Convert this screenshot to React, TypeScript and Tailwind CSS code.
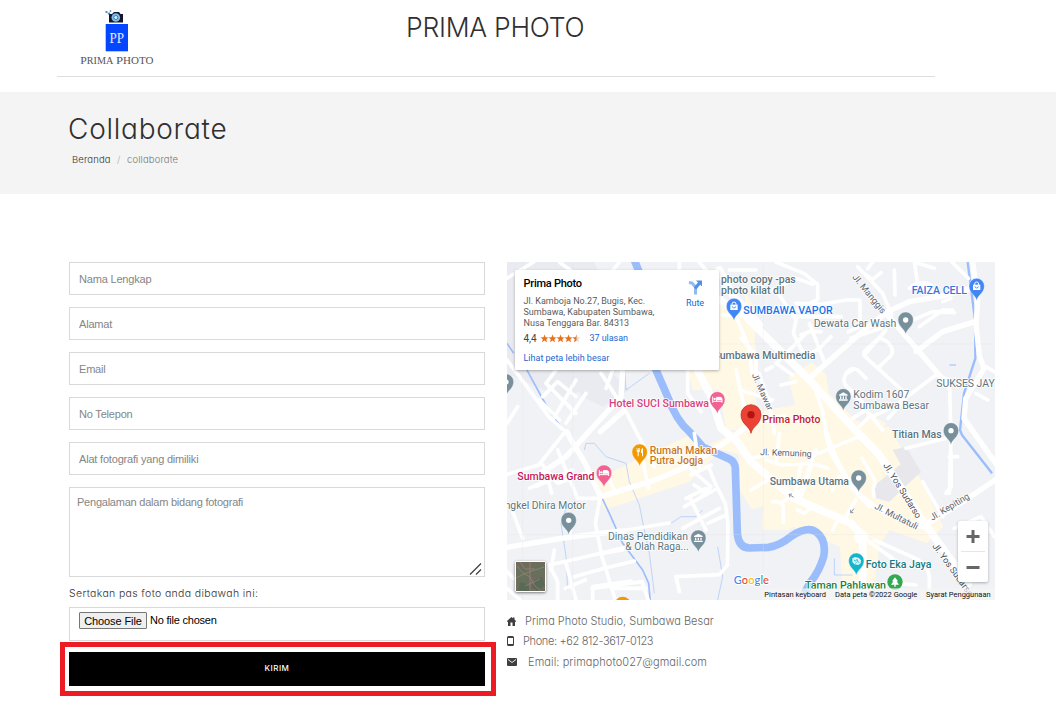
import React from "react";

const geo = "font-['Inter','Noto_Sans',sans-serif] [font-feature-settings:'cv11'] font-light";

function Logo() {
  return (
    <svg className="block h-[64px] w-[80px]" viewBox="77 6 80 64">
      <path d="M109 14h3l2-2h5l1.500 2h2.500v8.500h-14z" fill="#15152f" />
      <circle cx="115.800" cy="17.500" r="4.300" fill="#7fbce8" />
      <circle cx="115.800" cy="17.500" r="2" fill="#d7f0ff" stroke="#3c79ae" strokeWidth="1" />
      <path d="M105.500 11.500l2 1M108 14l2-1M110 10.500l1 1" stroke="#3c88b6" strokeWidth="1.500" />
      <rect x="105.700" y="24" width="22.300" height="27.300" fill="#0546ff" />
      <text x="109.500" y="42.500" fontSize="14" textLength="14.500" lengthAdjust="spacingAndGlyphs" fill="#e4ecff" fontFamily="Liberation Serif, serif">PP</text>
      <g fill="#555" fontFamily="Liberation Serif, serif">
        <text x="80.300" y="64.200" fontSize="11" textLength="33" lengthAdjust="spacingAndGlyphs">P<tspan fontSize="9.500">RIMA</tspan></text>
        <text x="116" y="64.200" fontSize="11" textLength="37.500" lengthAdjust="spacingAndGlyphs">P<tspan fontSize="9.500">HOTO</tspan></text>
      </g>
    </svg>
  );
}

function Pin({ x, y, c, kind = "dot" }: { x: number; y: number; c: string; kind?: string }) {
  return (
    <g transform={`translate(${x} ${y})`}>
      <path d="M0 43C-4 25-23 20-23-1A23 23 0 0 1 23-1C23 20 4 25 0 43Z" fill={c} stroke="#fff" strokeOpacity=".6" strokeWidth="2" />
      {kind === "dot" && <circle r="8" fill="#fff" />}
      {kind === "bag" && (
        <>
          <path d="M-11-5h22v16h-22z" fill="#fff" />
          <path d="M-6-4v-3a6 6 0 0 1 12 0v3" fill="none" stroke="#fff" strokeWidth="3" />
          <path d="M-5 0a5 5 0 0 0 10 0" fill="none" stroke={c} strokeWidth="2.500" />
        </>
      )}
      {kind === "bed" && (
        <>
          <path d="M-14-9v18M-14 5h28v4M14 5v-7q0-5-5-5H-2V5" fill="none" stroke="#fff" strokeWidth="3" />
          <path d="M-2-7H8q6 0 6 6v3H-2z" fill="#fff" />
          <circle cx="-8" cy="-2" r="3.500" fill="#fff" />
        </>
      )}
      {kind === "bank" && <path d="M-13-6L0-13 13-6v3h-26zM-10-1h4v8h-4zM-2-1h4v8h-4zM6-1h4v8H6zM-13 8h26v4h-26z" fill="#fff" />}
      {kind === "food" && <path d="M-9-12v8q0 4 3 5v12h3V1q4-1 4-5v-8h-2v7h-2v-7h-2v7h-2v-7zM10-12q-6 1-6 9v6h3v10h3z" fill="#fff" />}
      {kind === "camera" && (
        <>
          <path d="M-12-8l8-4 12 3 6 7-1 9-7 5-12-2-6-7z" fill="#d8f6f5" />
          <path d="M-7-4l4 5 5-6 2 7 5 2M-3 8l4-4" fill="none" stroke={c} strokeWidth="2.500" />
        </>
      )}
    </g>
  );
}

type LabelProps = { x: number; y: number; w: number; c?: string; r?: number; s?: number; m?: number; children: string };
function Label({ x, y, w, c = "#5b7480", r = 0, s = 31, m = 500, children }: LabelProps) {
  return (
    <text
      x={x}
      y={y}
      fontSize={s}
      fontWeight={m}
      fill={c}
      stroke="#fff"
      strokeWidth="5"
      strokeLinejoin="round"
      paintOrder="stroke"
      textLength={w}
      lengthAdjust="spacingAndGlyphs"
      transform={r ? `rotate(${r} ${x} ${y})` : undefined}
    >
      {children}
    </text>
  );
}

function MapDrawing() {
  return (
    <svg className="block h-full w-full" viewBox="3 6 1464 1014" fontFamily="Roboto, sans-serif">
      <rect width="1500" height="1050" fill="#f0f2f5" />
      {/* built-up areas */}
      <path d="M3 6h260l120 230-60 110-150 70L3 340zM170 330h140l60 60-80 50-60-30z" fill="#e9ebf0" />
      <g fill="#fef8e5">
        <path d="M640 130L690 130 717 190 750 260 750 510 660 510 640 390 560 390 545 330H640Z" />
        <path d="M717 90l30 60v100l-30-30zM847 350l70-42 42 32 10 60 80 80 80 32-20 38H737l-20-80 60-20 90-15z" />
        <path d="M1080 455l60 35-20 30-40-20z" />
        <path d="M270 660l130-65 165-75 70 60-85 85-255 85zM600 560l100-50h60v160l-30 20-20-90-20-20z" />
        <path d="M700 500h450l40 70 50 80 72 150-50 50-112-40-30 50-20 150h-90l-8-150-140-60-15 10h-80l5-70-35 8-37-60z" />
      </g>
      <path d="M1095 685l105-85 45 35-95 90-40-10zM1160 570l40-10 45 75-45 5z" fill="#e8e7ec" />
      {/* waterways */}
      <g fill="none" stroke="#9bbdfb" strokeLinejoin="round">
        <path d="M385 0L437 130" strokeWidth="23" />
        <path d="M437 300L485 410Q510 480 550 515L592 562 670 597Q687 605 688 625L694 820Q698 864 730 864L787 862Q820 858 857 828 905 797 932 817 962 840 953 890 940 935 912 968L895 1000" strokeWidth="23" />
        <path d="M3 250l20 30M60 325l60 110 60 90 60 80 30 70 40 85 40 90 60 80 18 40 8 90" strokeWidth="5" />
        <path d="M235 570l5-20 25 0 35 40 60 20 10 55 30 70 15 75 15 70 15 120M355 310l5 80 70-50M185 730l-20 60 15 100 5 100M495 790l30-20h45l20-20M635 860l15 90-15 70M985 895v50h55" strokeWidth="2.500" strokeOpacity=".7" />
        <path d="M1385 6l22 174 1 115-34 105-12 110 6 15 90 115" strokeWidth="7" />
        <path d="M1330 315h20" strokeWidth="3" />
      </g>
      {/* minor streets */}
      <g fill="none" stroke="#fff" strokeWidth="11" strokeLinecap="round" strokeLinejoin="round">
        <path d="M3 55l80-49M160 6l40 30M340 6l-65 85M520 6v30M580 6l45 55M3 300l60 80 65 90 50 45-80 100-95 28M35 440L3 490M110 410l45-45 55 45M150 330l-30 40 90 90M210 360l-70 120M240 400l-60 90M100 420l60 60M285 340l75 115 85 165M320 330l-20 55" />
        <path d="M545 330v70l40 55M690 330l20 90 20 90M670 30h80M650 165h38l40 95 10 80M700 390l100 30" />
        <path d="M185 515l50 95 48 100-15 80 20 100 40 130M155 570l60 145h68M110 615l45 55 80-30M70 685l65-30-15-30M90 680l110-50M125 655l12 45M20 755l30 80M193 830v-25M300 640l30 60M410 600l18 85M545 620l70 60-30 30M555 645l60-30M595 695l-30-20" />
        <path d="M130 915l90-20 145-35M130 915l25 50v60M205 950l90-25 90-22M258 985l150-20 20 60M180 910l30 110M3 985l45 40M145 870l-10 60M178 985l60-25M350 870l-90 15M260 1020v-40l115-17M320 985h100M3 935l20 20M520 995l-10-45 130-6 24-28 2-125-8-60-30-60-20-50M565 520l15 100M550 710l50 100M530 805l110-60M540 715l60-30M535 740l90-50M605 790l55-25" />
        <path d="M810 6l85 35 40 32v45l-65 35h-33M800 88h15l50-35 55 20M820 105l50 75-8 40 30 60M870 130l80 2 70-12 42 0v80l-35 15M910 190l45 115M860 170h145M885 225l25-10h35M900 290l40-25 35-35" />
        <path d="M1100 6l-15 20M1055 20l75 80 27 65M1125 38l-25 20-30-20M1165 30l2 75M1225 6l10 65 58 30M1210 85q35-30 68-8M1285 25l-50-15M1387 55l-55-55M1220 180l60-25 65 3M1240 200l70-50 30 0M1310 125l25-10" />
        <path d="M860 345l-50-35 90-90M705 235l45 50v65M760 340l30 90 15 90M780 330l20-10M870 365l-45 10M1080 270q-15 12 3 25l110 100q15 12 4 25l-50 55M1035 235l90-30M1075 285l65-75M1115 325l40-38q12-20-12-42l-22-12-40 35" />
        <path d="M1040 330l-20 12q-12 20 0 35l50 50M1020 340q15-20 35-10l25 25M930 395l20 60 10 60M1040 475l40-25 50 60M1060 500l35-35M1100 470l70-35 120-90 40 15 5 170-5 170M1410 400l35 20M1440 320l25 15" />
        <path d="M737 595l90-20 110 5 85-35 50-20M780 600l45 15 90-5 50 15M735 690l60-35M820 520l-8 80M885 610l-20 110M915 620l-30 90M960 515l60 150 70 75M930 570l-50 135M1000 650l-20 40M1068 595l35 60q8 15-2 30l3 25M1050 720l-40 65" />
        <path d="M800 725q35 0 32 20v42M830 725l50-30M875 750l20 10 20-15M1000 770l-20 40" />
        <path d="M1200 565l120-30 20-40M1335 580v100l-15 20M1330 590h25M1250 665l60 105M1345 805l80-35 40 60M1105 840l130 58q33 22 35 52v70M1095 850l65 45M1090 845l75 55M1170 970l60 5" />
      </g>
      {/* collector roads */}
      <g fill="none" stroke="#fff" strokeWidth="16" strokeLinecap="round" strokeLinejoin="round">
        <path d="M3 862l170-28 180-22M283 710l150-45 110-45 110-70 90-65 90-15M180 515l58 95 45 100M915 350l80-70 80-70 70-55 65-30 90-15 97-25M1400 6l15 110-5 80 10 90 14 40-55 90-5 60 103 145M1140 160l190 220M1230 275l80-60 97-30M1265 790l105-65 105-70M350 455l-67 60M960 515l15 60 50 85 35 45 45 35 110 50 45 12" />
        <path d="M350 812l140-23" strokeWidth="10" />
        <path d="M350 330l-5 80-165 180-75 50" />
      </g>
      <g fill="none" stroke="#fff" strokeLinecap="round" strokeLinejoin="round">
        <path d="M560 60l80 60 75 45 90 90 108 108 140 153 64 65 70 105 62 95 138 190" strokeWidth="23" />
        <path d="M570 320l45 90 30 95 45 35 45 65 70 60 60 50 170 75 35 38 0 180M640 30l40 75 80 90" strokeWidth="23" />
      </g>
      <circle cx="1066" cy="832" r="21" fill="#fff" />
      <path d="M3 252h1470M3 824h1470M50 6v1014M772 6v1014M200 6v1014" stroke="#dfe2e5" strokeOpacity=".4" strokeWidth="2" />

      <Label x={645} y={70} w={224}>photo copy -pas</Label>
      <Label x={645} y={101} w={190}>photo kilat dll</Label>
      <Label x={712} y={162} w={268} c="#1a73e8">SUMBAWA VAPOR</Label>
      <Label x={622} y={296} w={306}>Sumbawa Multimedia</Label>
      <Label x={309} y={440} w={300} c="#d93e7d">Hotel SUCI Sumbawa</Label>
      <Label x={1217} y={101} w={166} c="#3974d9">FAIZA CELL</Label>
      <Label x={923} y={200} w={248} m={400}>Dewata Car Wash</Label>
      <Label x={1042} y={415} w={168} m={400}>Kodim 1607</Label>
      <Label x={1042} y={446} w={227} m={400}>Sumbawa Besar</Label>
      <Label x={1291} y={382} w={175} m={400}>SUKSES JAY</Label>
      <Label x={1158} y={535} w={149}>Titian Mas</Label>
      <Label x={769} y={488} w={174} c="#c5221f">Prima Photo</Label>
      <Label x={431} y={581} w={202} c="#c9771d">Rumah Makan</Label>
      <Label x={431} y={613} w={160} c="#c9771d">Putra Jogja</Label>
      <Label x={34} y={661} w={231} c="#c2185b">Sumbawa Grand</Label>
      <Label x={-4} y={747} w={243} m={400}>ngkel Dhira Motor</Label>
      <Label x={306} y={839} w={240} m={400}>Dinas Pendidikan</Label>
      <Label x={358} y={870} w={190} m={400}>&amp; Olah Raga...</Label>
      <Label x={791} y={674} w={238}>Sumbawa Utama</Label>
      <Label x={1079} y={925} w={197} c="#147b88">Foto Eka Jaya</Label>
      <Label x={897} y={986} w={243} c="#188038">Taman Pahlawan</Label>
      <Label x={1038} y={52} w={142} c="#5f6368" r={51} s={27} m={400}>Jl. Manggis</Label>
      <Label x={737} y={344} w={120} c="#5f6368" r={66} s={26} m={400}>Jl. Mawar</Label>
      <Label x={762} y={585} w={155} c="#5f6368" r={2} s={27} m={400}>Jl. Kemuning</Label>
      <Label x={1131} y={616} w={190} c="#4d5155" r={58} s={27} m={400}>Jl. Yos Sudarso</Label>
      <Label x={1104} y={745} w={142} c="#5f6368" r={27} s={27} m={400}>Jl. Multatuli</Label>
      <Label x={1279} y={782} w={132} c="#5f6368" r={-31} s={27} m={400}>Jl. Kepiting</Label>
      <Label x={1278} y={858} w={190} c="#4d5155" r={54} s={27} m={400}>Jl. Yos Sudarso</Label>
      <path d="M863 712l-14-9m0 0l3 9m-3-9l9-1M1034 758l10-12m-10 12l0-9m0 9l8 0" stroke="#8a98a3" strokeWidth="3" fill="none" />

      <Pin x={684} y={139} c="#4285f4" kind="bag" />
      <Pin x={1412} y={79} c="#4285f4" kind="bag" />
      <Pin x={634} y={419} c="#f06292" kind="bed" />
      <Pin x={294} y={639} c="#f06292" kind="bed" />
      <Pin x={401} y={576} c="#f29900" kind="food" />
      <Pin x={1199} y={180} c="#78909c" />
      <Pin x={1335} y={512} c="#78909c" />
      <Pin x={1058} y={654} c="#78909c" />
      <Pin x={188} y={781} c="#78909c" />
      <Pin x={0} y={366} c="#78909c" />
      <Pin x={1012} y={410} c="#78909c" kind="bank" />
      <Pin x={577} y={834} c="#78909c" kind="bank" />
      <Pin x={1051} y={903} c="#12b5cb" kind="camera" />
      <circle cx="1167" cy="966" r="23" fill="#34a853" />
      <g transform="translate(1167 967)"><path d="M0-15l9 12H5l7 10H2v6h-4V7h-10l7-10h-4z" fill="#fff" /></g>
      <circle cx="350" cy="1034" r="24" fill="#f29900" />
      <path d="M735 520c-4-22-30-27-30-56a30 30 0 0 1 60 0c0 29-26 34-30 56z" fill="#ea4335" stroke="#c5221f" strokeWidth="2" />
      <circle cx="735" cy="464" r="11" fill="#b31412" />

      <text x="683" y="972" fontSize="34" fontWeight="500" fontFamily="Lato, sans-serif" textLength="106" lengthAdjust="spacingAndGlyphs" stroke="#fff" strokeWidth="6" paintOrder="stroke">
        <tspan fill="#4285f4">G</tspan><tspan fill="#ea4335">o</tspan><tspan fill="#fbbc04">o</tspan><tspan fill="#4285f4">g</tspan><tspan fill="#34a853">l</tspan><tspan fill="#ea4335">e</tspan>
      </text>
      <rect x="768" y="985" width="700" height="36" fill="#f5f5f5" fillOpacity=".7" />
      <g fill="#111" fontSize="23">
        <text x="775" y="1010" textLength="185" lengthAdjust="spacingAndGlyphs">Pintasan keyboard</text>
        <text x="987" y="1010" textLength="247" lengthAdjust="spacingAndGlyphs">Data peta ©2022 Google</text>
        <text x="1260" y="1010" textLength="194" lengthAdjust="spacingAndGlyphs">Syarat Penggunaan</text>
      </g>
    </svg>
  );
}

function PlaceCard() {
  return (
    <div className="absolute left-2 top-2 flex h-[100px] w-[204px] justify-between rounded-[1px] bg-white pl-[8.500px] pr-[14px] pt-[7px] font-['Roboto',sans-serif] shadow-[0_1px_3px_rgba(0,0,0,0.3)]">
      <div className="whitespace-nowrap">
        <div className="text-[11px] font-medium leading-[13px] tracking-[-0.25px] text-black">Prima Photo</div>
        <div className="mt-[6px] text-[9px] leading-[11px] text-[#5b5b5b]">
          Jl. Kamboja No.27, Bugis, Kec.<br />Sumbawa, Kabupaten Sumbawa,<br />Nusa Tenggara Bar. 84313
        </div>
        <div className="mt-[3px] flex h-3 items-center text-[10px] text-[#444]">
          <span className="w-[16px]">4,4</span>
          <svg className="h-[9px] w-[41px]" viewBox="0 0 41 9">
            {[0, 1, 2, 3].map((i) => (
              <path key={i} transform={`translate(${i * 8} 0)`} d="M4.500 .5l1.100 2.800 3 .1-2.300 1.900.8 2.900-2.600-1.600-2.500 1.600.8-2.900L.5 3.400l3-.1z" fill="#e7711b" />
            ))}
            <path transform="translate(32 0)" d="M4.500 .5l1.100 2.800 3 .1-2.300 1.900.8 2.900-2.600-1.600-2.500 1.600.8-2.900L.5 3.400l3-.1z" fill="#ddd" />
            <path transform="translate(32 0)" d="M4.500 .5v6.100l-2.500 1.600.8-2.900L.5 3.400l3-.1z" fill="#e7711b" />
          </svg>
          <span className="ml-[9px] pt-px text-[9px] leading-[11px] tracking-[-0.05px] text-[#1a67d2]">37 ulasan</span>
        </div>
        <div className="mt-[8px] text-[9px] leading-3 text-[#1a67d2]">Lihat peta lebih besar</div>
      </div>
      <div className="flex w-[20px] flex-col items-center text-[9px] text-[#1a67d2]">
        <svg className="mt-[2px] h-4 w-4" viewBox="0 0 16 16">
          <path d="M2 3.500l3 .5 3.500 4V15.500" fill="none" stroke="#91baf0" strokeWidth="3" strokeLinejoin="round" />
          <path d="M8 9.500l5-6" stroke="#5390e5" strokeWidth="3.200" />
          <path d="M9 1.500h6v6z" fill="#5390e5" />
        </svg>
        <div className="mt-[2px] leading-3">Rute</div>
      </div>
    </div>
  );
}

function SatelliteThumb() {
  return (
    <div className="absolute bottom-[8px] left-2 h-[31px] w-[31px] rounded-[2px] border border-white shadow-[0_1px_3px_rgba(0,0,0,0.5)]">
      <svg className="h-full w-full" viewBox="0 0 29 29">
        <rect width="29" height="29" fill="#6f6c5e" />
        <path d="M0 9l5-5 6 3 3 7-6 8-8-2zM18 2l9 0 2 10-8 3-5-6z" fill="#66705a" />
        <path d="M4 20l7 2 4 7H2zM18 18l8-3 3 8-7 6-6-4z" fill="#5a6955" />
        <path d="M1 4l6 7 7 4 5 9 5 4M14 0v29M0 16l10-5 18-6M9 24l15-7M4 0l5 7 10 0" fill="none" stroke="#98887a" strokeWidth="1" strokeOpacity=".7" />
      </svg>
    </div>
  );
}

function Field({ children }: { children: string }) {
  return <input className="block h-[33px] w-full border border-[#d9d9d9] px-[9px] text-[11px] tracking-[-0.19px] outline-none placeholder:text-[#858585] placeholder:opacity-100" placeholder={children} />;
}

export default function App() {
  return (
    <div className="h-[702px] w-[1056px] overflow-hidden bg-white font-['Liberation_Sans',sans-serif]">
      <header className="ml-[57px] flex h-[77px] w-[878px] items-start border-b border-[#dedede] pl-5 pt-[6px]">
        <Logo />
        <h1 className={`${geo} ml-[249px] mt-[3px] whitespace-nowrap text-[26.500px] leading-[36px] tracking-[-0.250px] text-[#303030]`}>PRIMA PHOTO</h1>
      </header>
      <section className="mt-[15px] h-[102px] bg-[#f4f4f4] pl-[68px] pt-[19px]">
        <h2 className={`${geo} text-[28px] leading-[36px] tracking-[0.750px] text-[#303030]`}>Collaborate</h2>
        <nav className={`${geo} ml-[4px] mt-[6px] flex text-[9.500px] leading-[14px] tracking-[0.140px] text-[#333]`}>
          <span className="w-[45px]">Beranda</span>
          <span className="w-[10px] text-[#aaa]">/</span>
          <span className="text-[#777]">collaborate</span>
        </nav>
      </section>
      <main className="flex pl-[69px] pt-[68px]">
        <form className="w-[416px]">
          <div className="flex flex-col gap-3">
            <Field>Nama Lengkap</Field>
            <Field>Alamat</Field>
            <Field>Email</Field>
            <Field>No Telepon</Field>
            <Field>Alat fotografi yang dimiliki</Field>
            <div className="relative h-[90px] border border-[#d9d9d9] px-[7px] pt-[8px] text-[11px] leading-[13px] tracking-[-0.230px] text-[#858585]">
              Pengalaman dalam bidang fotografi
              <svg className="absolute bottom-[1px] right-[2px] h-3 w-[13px]" viewBox="0 0 13 12">
                <path d="M1 11.500L12 .5M7 11.500l5-5" stroke="#444" strokeWidth="1.300" />
              </svg>
            </div>
          </div>
          <div className={`${geo} mt-[9px] h-[21px] whitespace-nowrap text-[10.500px] leading-[15px] tracking-[0.350px] text-[#333]`}>Sertakan pas foto anda dibawah ini:</div>
          <div className="flex h-[34px] items-start border border-[#d9d9d9] pl-[9px] pt-[4px] text-[11px] leading-[17px] tracking-[-0.220px] text-black">
            <span className="h-[17px] w-[68px] rounded-[1px] border border-[#767676] bg-[#efefef] text-center tracking-[-0.100px]">Choose File</span>
            <span className="ml-[3px]">No file chosen</span>
          </div>
          <div className="-ml-[9px] mt-[1px] w-[436px] border-[5px] border-[#ed1c24] px-1 py-[5px]">
            <div className="mr-[2px] flex h-[34px] items-center justify-center bg-black pb-[2px] font-['Inter',sans-serif] text-[8px] font-medium tracking-[0.500px] text-white">KIRIM</div>
          </div>
        </form>
        <section className="ml-[22px] w-[488px]">
          <div className="relative h-[338px] overflow-hidden">
            <MapDrawing />
            <PlaceCard />
            <SatelliteThumb />
            <div className="absolute right-[7px] top-[259px] flex h-[61px] w-[30px] flex-col items-center rounded-[2px] bg-white shadow-[0_1px_3px_rgba(0,0,0,0.3)]">
              <svg className="h-full w-full" viewBox="0 0 30 61">
                <path d="M15 9v13M8.500 15.500h13M8.500 46.500h13" stroke="#666" strokeWidth="3" />
                <path d="M3 30.500h24" stroke="#e6e6e6" />
              </svg>
            </div>
          </div>
          <div className={`${geo} mt-[11px] flex flex-col text-[11px] leading-[20px] text-[#666]`}>
            <div className="flex h-5 items-center">
              <svg className="mr-[9px] h-[9px] w-[9px]" viewBox="0 0 9 9"><path d="M0 4l4.500-4L6 1.300V.5h1.500v2L9 4v.7H8V9H5.500V5.500h-2V9H1V4.700H0z" fill="#3f3f3f" /></svg>
              <span className="whitespace-nowrap">Prima Photo Studio, Sumbawa Besar</span>
            </div>
            <div className="flex h-5 items-center">
              <svg className="mr-[9px] h-[10px] w-[7px]" viewBox="0 0 7 10"><path d="M1.500 0h4Q7 0 7 1.500v7Q7 10 5.500 10h-4Q0 10 0 8.500v-7Q0 0 1.500 0zM1 2v6h5V2z" fillRule="evenodd" fill="#3f3f3f" /></svg>
              <span className="whitespace-nowrap tracking-[-0.350px]">Phone: +62 812-3617-0123</span>
            </div>
            <div className="flex h-[22px] items-center">
              <svg className="mr-[11px] h-[8px] w-[10px]" viewBox="0 0 10 8"><rect width="10" height="8" rx="1" fill="#3f3f3f" /><path d="M1 1.500l4 3 4-3" stroke="#fff" strokeWidth=".9" fill="none" /></svg>
              <span className="whitespace-nowrap tracking-[0.080px]">Email: primaphoto027@gmail.com</span>
            </div>
          </div>
        </section>
      </main>
    </div>
  );
}
